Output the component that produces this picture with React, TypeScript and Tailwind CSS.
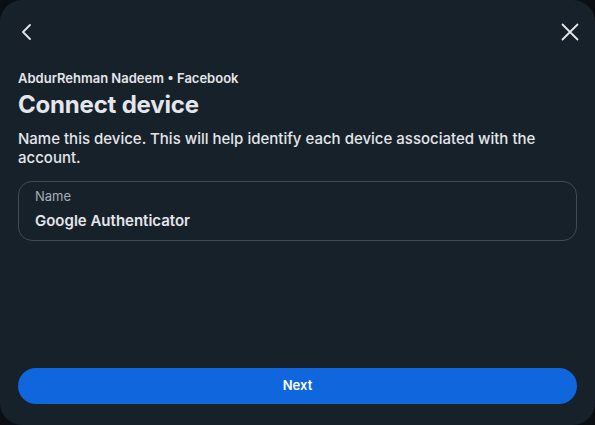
import React, { useState } from 'react';

const App: React.FC = () => {
    const [name, setName] = useState('Google Authenticator');

    return (
        <div className="w-[595px] h-[425px] bg-[#0b0f13] overflow-hidden" style={{ fontFamily: 'Inter, "Noto Sans", sans-serif' }}>
            <div className="w-full h-full bg-[#17212a] rounded-[22px] flex flex-col px-[18px] pt-[20px] pb-[21px]">
                <div className="flex items-center justify-between h-[24px]">
                    <button type="button" className="w-[24px] h-[24px] -ml-[3px] flex items-center justify-center text-[#e4e6eb]">
                        <svg width="20" height="20" viewBox="0 0 20 20" fill="none" stroke="currentColor" strokeWidth="1.8" strokeLinecap="round" strokeLinejoin="round">
                            <path d="M13 3 L6 10 L13 17" />
                        </svg>
                    </button>
                    <button type="button" className="w-[24px] h-[24px] -mr-[5px] flex items-center justify-center text-[#e4e6eb]">
                        <svg width="20" height="20" viewBox="0 0 20 20" fill="none" stroke="currentColor" strokeWidth="1.8" strokeLinecap="round">
                            <path d="M2.5 2.5 L17.5 17.5 M17.5 2.5 L2.5 17.5" />
                        </svg>
                    </button>
                </div>

                <div className="mt-[25px] text-[13px] font-semibold text-[#e4e6eb] leading-[18px]">AbdurRehman Nadeem • Facebook</div>
                <h1 className="text-[24px] font-bold text-[#e4e6eb] leading-[30px] mt-[3px] tracking-[-0.2px]">Connect device</h1>
                <p className="mt-[9px] text-[15px] text-[#e4e6eb] leading-[19px] font-medium">
                    Name this device. This will help identify each device associated with the account.
                </p>

                <label className="mt-[14px] h-[60px] border border-[#3f4b55] rounded-[14px] px-[16px] pt-[5px] flex flex-col">
                    <span className="text-[13px] text-[#a7aeb5] leading-[18px]">Name</span>
                    <input
                        value={name}
                        onChange={e => setName(e.target.value)}
                        className="bg-transparent outline-none text-[15px] font-semibold text-[#e4e6eb] leading-[20px] mt-[6px]"
                    />
                </label>

                <div className="flex-1" />

                <button type="button" className="h-[36px] w-full rounded-full bg-[#0f66dd] text-white text-[13px] font-semibold">
                    Next
                </button>
            </div>
        </div>
    );
};

export default App;
